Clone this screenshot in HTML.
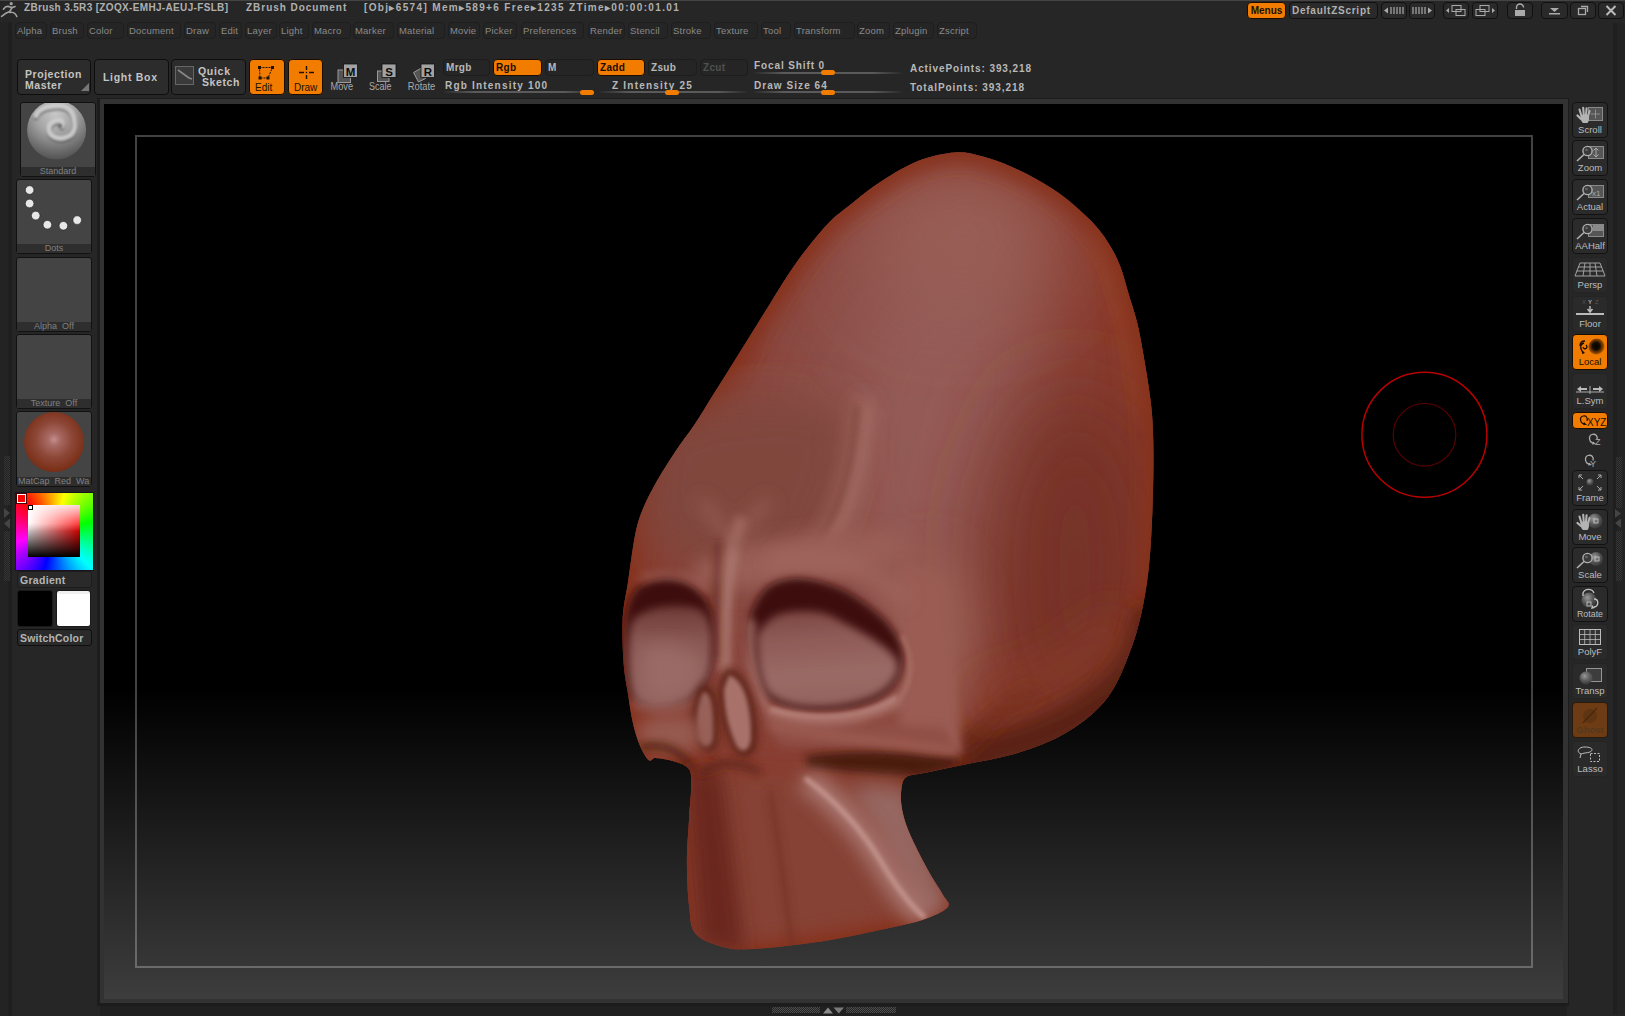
<!DOCTYPE html>
<html><head><meta charset="utf-8">
<style>
*{margin:0;padding:0;box-sizing:border-box}
html,body{width:1625px;height:1016px;overflow:hidden;background:#262626;font-family:"Liberation Sans",sans-serif}
.a{position:absolute}
.t{position:absolute;white-space:nowrap;font-weight:bold;color:#b0b0b0;font-size:10px;line-height:12px}
.mb{position:absolute;top:22px;height:17px;border:1px solid #1e1e1e;border-radius:4px;background:#252525;color:#8a8a8a;font-size:9.5px;line-height:15px;padding-left:1px;white-space:nowrap;letter-spacing:0.2px}
.tb{position:absolute;top:59px;height:36px;border:1px solid #0e0e0e;border-radius:4px;background:#2c2c2c;color:#c8c8c8;font-weight:bold;font-size:11px;line-height:11px;white-space:nowrap}
.or{background:#f27c00;border-color:#1a0d00;color:#1a1000}
.sb{position:absolute;top:59px;height:17px;border:1px solid #1d1d1d;border-radius:4px;background:#252525;color:#b8b8b8;font-weight:bold;font-size:10px;line-height:15px;padding-left:2px;letter-spacing:0.3px}
.sl{position:absolute;height:2px;background:linear-gradient(to right,#2a2a2a,#5a5a5a 20%,#5a5a5a 80%,#2a2a2a)}
.kn{position:absolute;width:14px;height:5px;border-radius:3px;background:#f27c00}
.lb{position:absolute;left:16px;width:76px;height:75px;border:1px solid #111;border-radius:3px;background:#444}
.lbl{position:absolute;left:0;right:0;bottom:0;height:9px;background:#2e2e2e;color:#808080;font-size:9px;line-height:9px;text-align:center;white-space:nowrap;overflow:hidden}
.rb{position:absolute;left:1572px;width:36px;height:36px;border:1px solid #121212;border-radius:4px;background:#2b2b2b;color:#c0c0c0;font-size:9px;text-align:center}
.rb span{position:absolute;left:0;right:0;bottom:2px;line-height:9px}
.rb.or{background:#f27c00;border-color:#1a0d00}
.rf{border-color:#242424;background:#2a2a2a}
.wb{position:absolute;top:2px;height:17px;border:1px solid #111;border-radius:4px;background:#2a2a2a;color:#b0b0b0;font-weight:bold;font-size:10px;line-height:15px;text-align:center}
.wb.or{background:#f27c00;border-color:#1a0d00}
.sb.or{background:#f27c00;border-color:#1a0d00;color:#1a0d00}
</style></head><body>
<!-- title bar -->
<div class="a" style="left:0;top:0;width:1625px;height:1px;background:#444"></div>
<svg class="a" style="left:0;top:0" width="24" height="20"><g fill="none" stroke="#a2a2a2" stroke-width="1.6" stroke-linecap="round"><path d="M3.4 9.2 C5 7 6.5 6.2 8 6.4 C10 6.8 11 7.6 12.5 7.4 C13.5 7.2 14.5 6.8 15 6.5"/><path d="M12 7.8 L9.6 11.6 C7 12.5 4 14.5 1.6 16.4"/><path d="M9.6 12.4 C11.5 12 13.5 12.2 14.8 13.5 C15.8 14.5 16.4 15.5 16.8 16.5"/></g><circle cx="11.2" cy="3.7" r="1.6" fill="#a2a2a2"/></svg>
<div class="t" id="t1" style="left:24px;top:2px;letter-spacing:0.34px">ZBrush 3.5R3 [ZOQX-EMHJ-AEUJ-FSLB]</div>
<div class="t" id="t2" style="left:246px;top:2px;letter-spacing:0.97px">ZBrush Document</div>
<div class="t" id="t3" style="left:364px;top:2px;letter-spacing:1.35px">[Obj&#9656;6574] Mem&#9656;589+6 Free&#9656;1235 ZTime&#9656;00:00:01.01</div>


<!-- menu bar -->
<div class="mb" style="left:15px;width:32px">Alpha</div>
<div class="mb" style="left:50px;width:34px">Brush</div>
<div class="mb" style="left:87px;width:37px">Color</div>
<div class="mb" style="left:127px;width:54px">Document</div>
<div class="mb" style="left:184px;width:32px">Draw</div>
<div class="mb" style="left:219px;width:23px">Edit</div>
<div class="mb" style="left:245px;width:32px">Layer</div>
<div class="mb" style="left:279px;width:30px">Light</div>
<div class="mb" style="left:312px;width:39px">Macro</div>
<div class="mb" style="left:353px;width:41px">Marker</div>
<div class="mb" style="left:397px;width:48px">Material</div>
<div class="mb" style="left:448px;width:32px">Movie</div>
<div class="mb" style="left:483px;width:34px">Picker</div>
<div class="mb" style="left:521px;width:63px">Preferences</div>
<div class="mb" style="left:588px;width:37px">Render</div>
<div class="mb" style="left:628px;width:40px">Stencil</div>
<div class="mb" style="left:671px;width:40px">Stroke</div>
<div class="mb" style="left:714px;width:44px">Texture</div>
<div class="mb" style="left:761px;width:30px">Tool</div>
<div class="mb" style="left:794px;width:61px">Transform</div>
<div class="mb" style="left:857px;width:33px">Zoom</div>
<div class="mb" style="left:893px;width:41px">Zplugin</div>
<div class="mb" style="left:937px;width:40px">Zscript</div>

<!-- right title buttons -->
<div class="wb or" style="left:1247px;width:39px;color:#201000">Menus</div>
<div class="wb" style="left:1289px;width:89px;letter-spacing:0.75px;text-align:left;padding-left:2px">DefaultZScript</div>
<div class="wb" style="left:1381px;width:26px"><svg width="24" height="15" viewBox="0 0 24 15"><path d="M2 7.5 L6 4.5 V10.5Z" fill="#aaa"/><g stroke="#aaa" stroke-width="1.2"><path d="M9 4V11M12 4V11M15 4V11M18 4V11M21 4V11"/></g></svg></div>
<div class="wb" style="left:1409px;width:26px"><svg width="24" height="15" viewBox="0 0 24 15"><g stroke="#aaa" stroke-width="1.2"><path d="M3 4V11M6 4V11M9 4V11M12 4V11M15 4V11"/></g><path d="M22 7.5 L18 4.5 V10.5Z" fill="#aaa"/></svg></div>
<div class="wb" style="left:1443px;width:26px"><svg width="24" height="15" viewBox="0 0 24 15"><path d="M2 7.5 L5 5 V10Z" fill="#aaa"/><g fill="none" stroke="#aaa" stroke-width="1"><rect x="8" y="2.5" width="9" height="6"/><rect x="12" y="6.5" width="9" height="6"/></g></svg></div>
<div class="wb" style="left:1472px;width:26px"><svg width="24" height="15" viewBox="0 0 24 15"><g fill="none" stroke="#aaa" stroke-width="1"><rect x="3" y="6.5" width="9" height="6"/><rect x="7" y="2.5" width="9" height="6"/></g><path d="M22 7.5 L19 5 V10Z" fill="#aaa"/></svg></div>
<div class="wb" style="left:1507px;width:26px"><svg width="24" height="15" viewBox="0 0 24 15"><path d="M8.5 6 V4.5 a3.5 3.5 0 0 1 7 0" fill="none" stroke="#aaa" stroke-width="1.4"/><rect x="7" y="7" width="10" height="6" fill="#aaa"/></svg></div>
<div class="wb" style="left:1541px;width:27px"><svg width="25" height="15" viewBox="0 0 25 15"><path d="M8 5 H17 L12.5 9Z" fill="#aaa"/><rect x="7" y="10" width="11" height="1.5" fill="#aaa"/></svg></div>
<div class="wb" style="left:1570px;width:26px"><svg width="24" height="15" viewBox="0 0 24 15"><g fill="none" stroke="#aaa" stroke-width="1.3"><rect x="7.5" y="5.5" width="7" height="6"/><path d="M10 3.5 H16.5 V9"/></g></svg></div>
<div class="wb" style="left:1598px;width:26px"><svg width="24" height="15" viewBox="0 0 24 15"><path d="M7.5 3 L16.5 12 M16.5 3 L7.5 12" stroke="#bbb" stroke-width="2"/></svg></div>

<!-- toolbar -->
<div class="tb" style="left:17px;width:74px"><div class="t" style="left:7px;top:7.5px;font-size:10.5px;color:#c4c4c4;letter-spacing:0.55px">Projection</div><div class="t" style="left:7px;top:18.5px;font-size:10.5px;color:#c4c4c4;letter-spacing:0.55px">Master</div><svg class="a" style="left:63px;top:23px" width="8" height="8"><path d="M8 0 V8 H0Z" fill="#777"/></svg></div>
<div class="tb" style="left:94px;width:75px"><div class="t" style="left:8px;top:11px;font-size:10.5px;color:#c4c4c4;letter-spacing:0.7px">Light Box</div></div>
<div class="tb" style="left:171px;width:75px"><div class="a" style="left:3px;top:6px;width:19px;height:19px;border:1px solid #666;background:#3a3a3a"></div><svg class="a" style="left:5px;top:8px" width="16" height="14"><path d="M1 2 L12 10 L15 11" stroke="#888" stroke-width="1.6" fill="none"/></svg><div class="t" style="left:26px;top:5px;font-size:10.5px;color:#c4c4c4;letter-spacing:0.7px">Quick</div><div class="t" style="left:30px;top:15.5px;font-size:10.5px;color:#c4c4c4;letter-spacing:0.6px">Sketch</div></div>
<div class="tb or" style="left:249px;width:36px"><svg class="a" style="left:7px;top:5px" width="22" height="16"><path d="M2.5 2.5 H15.5 L11 13 H3Z" fill="none" stroke="#201000" stroke-width="1" stroke-dasharray="2 1"/><g fill="#201000"><rect x="1" y="1" width="3" height="3"/><rect x="14" y="1" width="3" height="3"/><rect x="1.5" y="11.5" width="3" height="3"/><rect x="9.5" y="11.5" width="3" height="3"/></g></svg><div class="t" style="left:5px;top:22px;font-weight:normal;color:#201000;font-size:10px">Edit</div></div>
<div class="tb or" style="left:288px;width:35px"><svg class="a" style="left:7px;top:5px" width="22" height="16"><g stroke="#201000" stroke-width="1.4"><path d="M10.5 1V5M10.5 10V14M3 7.5H8M13 7.5H18"/></g><rect x="9.8" y="6.8" width="1.4" height="1.4" fill="#201000"/></svg><div class="t" style="left:5px;top:22px;font-weight:normal;color:#201000;font-size:10px">Draw</div></div>
<svg class="a" style="left:325px;top:58px" width="115" height="38">
 <g fill="#545454" stroke="#9a9a9a" stroke-width="1"><rect x="13" y="12" width="12.5" height="12.5"/><rect x="52.5" y="13" width="11.5" height="10.5"/><path d="M88.5 14.5 L95.5 10.5 L100.5 20.5 L93.5 24Z"/></g>
 <g fill="#a2a2a2" stroke="#111" stroke-width="0.8"><rect x="18.5" y="6" width="14" height="13.5"/><rect x="57" y="6" width="14" height="13.5"/><rect x="96" y="6" width="13.5" height="13.5"/></g>
 <g font-family="Liberation Sans" font-weight="bold" font-size="11.5" fill="#0a0a0a" text-anchor="middle"><text x="25.5" y="17.5">M</text><text x="64" y="17.5">S</text><text x="103" y="17.5">R</text></g>
 <g font-family="Liberation Sans" font-size="10" fill="#aaa"><text x="5.5" y="32" textLength="22.5" lengthAdjust="spacingAndGlyphs">Move</text><text x="44" y="32" textLength="22.5" lengthAdjust="spacingAndGlyphs">Scale</text><text x="82.8" y="32" textLength="27.5" lengthAdjust="spacingAndGlyphs">Rotate</text></g>
</svg>

<!-- toolbar right part -->
<div class="sb" style="left:443px;width:47px">Mrgb</div>
<div class="sb or" style="left:493px;width:49px">Rgb</div>
<div class="sb" style="left:545px;width:49px">M</div>
<div class="sb or" style="left:597px;width:48px">Zadd</div>
<div class="sb" style="left:648px;width:49px">Zsub</div>
<div class="sb" style="left:700px;width:48px;color:#505050">Zcut</div>
<div class="t" id="t4" style="left:445px;top:80px;color:#b8b8b8;letter-spacing:1.2px">Rgb Intensity 100</div>
<div class="sl" style="left:444px;top:91px;width:150px"></div>
<div class="kn" style="left:580px;top:90px"></div>
<div class="t" id="t5" style="left:612px;top:80px;color:#b8b8b8;letter-spacing:1.22px">Z Intensity 25</div>
<div class="sl" style="left:600px;top:91px;width:147px"></div>
<div class="kn" style="left:665px;top:90px"></div>
<div class="t" id="t6" style="left:754px;top:60px;color:#b8b8b8;letter-spacing:0.89px">Focal Shift 0</div>
<div class="sl" style="left:754px;top:72px;width:148px"></div>
<div class="kn" style="left:821px;top:70px"></div>
<div class="t" id="t7" style="left:754px;top:79.5px;color:#b8b8b8;letter-spacing:1.06px">Draw Size 64</div>
<div class="sl" style="left:754px;top:91px;width:148px"></div>
<div class="kn" style="left:821px;top:90px"></div>
<div class="t" id="t8" style="left:910px;top:62.5px;color:#b8b8b8;letter-spacing:0.91px">ActivePoints: 393,218</div>
<div class="t" id="t9" style="left:910px;top:81.5px;color:#b8b8b8;letter-spacing:0.95px">TotalPoints: 393,218</div>

<!-- left shelf strip -->
<div class="a" style="left:0;top:22px;width:12px;height:994px;background:#232323"></div><div class="a" style="left:8px;top:22px;width:4px;height:994px;background:#1f1f1f"></div>


<!-- left shelf -->

<div class="lb" style="left:20px;top:102px;width:76px;height:75px">
 <svg class="a" style="left:0;top:0" width="74" height="64"><defs>
  <radialGradient id="sg1" cx="0.48" cy="0.22" r="0.85"><stop offset="0" stop-color="#c8c8c8"/><stop offset="0.4" stop-color="#a4a4a4"/><stop offset="0.75" stop-color="#6c6c6c"/><stop offset="1" stop-color="#474747"/></radialGradient>
  <filter id="bl1" filterUnits="userSpaceOnUse" x="0" y="0" width="74" height="64"><feGaussianBlur stdDeviation="1.1"/></filter></defs>
  <circle cx="35.6" cy="27" r="29.5" fill="url(#sg1)"/>
  <g filter="url(#bl1)" fill="none" stroke-linecap="round">
   <path d="M15.1 14.7 C18 7 30 4 41.1 5.3 C50 7 54 15 53.7 26.6 C53 33 48 36 43 37 C36 38.5 29 35 27.9 30 C27 24 31 20 37.9 19.5 C41 19.5 42 22 41 25" stroke="#444" stroke-width="5" opacity="0.55"/>
   <path d="M15.1 12.7 C18 5 30 2 41.1 3.3 C50 5 54 13 53.7 24.6 C53 31 48 34 43 35 C36 36.5 29 33 27.9 28 C27 22 31 18 37.9 17.5 C41 17.5 42 20 41 23" stroke="#d4d4d4" stroke-width="4.5" opacity="0.9"/>
  </g>
  <circle cx="39" cy="23" r="2.2" fill="#6a6a6a" filter="url(#bl1)"/>
 </svg>
 <div class="lbl">Standard</div></div>
<div class="lb" style="top:179px;height:75px">
 <svg class="a" style="left:0;top:0" width="74" height="64"><g fill="#e8e8e8" stroke="#222" stroke-width="0.6"><circle cx="12.6" cy="10" r="4.3"/><circle cx="12.6" cy="23.5" r="4.3"/><circle cx="18.7" cy="35.6" r="4.3"/><circle cx="30.4" cy="44.7" r="4.3"/><circle cx="46.4" cy="45.8" r="4.3"/><circle cx="60.2" cy="40.1" r="4.3"/></g></svg>
 <div class="lbl">Dots</div></div>
<div class="lb" style="top:257px;height:75px"><div class="lbl">Alpha&nbsp; Off</div></div>
<div class="lb" style="top:334px;height:75px"><div class="lbl">Texture&nbsp; Off</div></div>
<div class="lb" style="top:411px;height:76px">
 <div class="a" style="left:6.8px;top:0px;width:60px;height:60px;border-radius:50%;background:radial-gradient(circle at 50% 46%,#c48e8c 0%,#a86a64 14%,#8e4838 40%,#7a3018 70%,#621c06 100%)"></div>
 <div class="lbl" style="text-align:left;padding-left:1px">MatCap&nbsp; Red&nbsp; Wa</div></div>
<!-- color picker -->
<div class="a" style="left:15px;top:492px;width:79px;height:79px;border:1px solid #1a1420;background:conic-gradient(from 315deg,#f00,#ff0 60deg,#0f0 120deg,#0ff 180deg,#00f 240deg,#f0f 300deg,#f00 360deg)"></div>
<div class="a" style="left:28px;top:505px;width:52px;height:52px;background:linear-gradient(to bottom,rgba(0,0,0,0) 0%,rgba(0,0,0,0) 35%,#000 100%),linear-gradient(to right,#fff 0%,#f00 100%)"></div>
<div class="a" style="left:28px;top:505px;width:52px;height:52px;background:linear-gradient(to bottom,rgba(255,255,255,0.85) 0%,rgba(255,255,255,0) 50%)"></div>
<div class="a" style="left:17px;top:494px;width:9px;height:9px;border:1.5px solid #fff;background:#f00;box-shadow:0 0 0 1px #400"></div>
<div class="a" style="left:28px;top:505px;width:5px;height:5px;border:1px solid #000;background:#fff"></div>
<div class="a" style="left:17px;top:571px;width:75px;height:17px;border:1px solid #1c1c1c;border-radius:3px;background:#2a2a2a"><div class="t" style="left:2px;top:2px;font-size:10.5px;color:#b4b4b4;letter-spacing:0.3px">Gradient</div></div>
<div class="a" style="left:17px;top:590px;width:36px;height:37px;border:1px solid #1a1a1a;border-radius:3px;background:#000"></div>
<div class="a" style="left:56px;top:590px;width:35px;height:37px;border:1px solid #1a1a1a;border-radius:3px;background:linear-gradient(#f0f0f0 0,#f0f0f0 3px,#fff 3px)"></div>
<div class="a" style="left:17px;top:629px;width:75px;height:17px;border:1px solid #0f0f0f;border-radius:3px;background:#2a2a2a"><div class="t" style="left:2px;top:2px;font-size:10.5px;color:#b4b4b4;letter-spacing:0.2px">SwitchColor</div></div>
<!-- left scroll -->
<div class="a" style="left:4px;top:456px;width:6px;height:49px;background:repeating-conic-gradient(#363636 0 25%,#222 0 50%) 0 0/2px 2px"></div>
<svg class="a" style="left:3px;top:507px" width="8" height="23"><path d="M1 1 L7 6 L1 11Z" fill="#444"/><path d="M7 11.5 L1 16.5 L7 22Z" fill="#444"/></svg>
<div class="a" style="left:4px;top:531px;width:6px;height:50px;background:repeating-conic-gradient(#363636 0 25%,#222 0 50%) 0 0/2px 2px"></div>

<!-- canvas -->
<div class="a" style="left:97px;top:98px;width:1472px;height:908px;background:#1c1c1c"></div>
<div class="a" style="left:100px;top:99px;width:1468px;height:904px;background:#323232"></div>
<div class="a" style="left:104px;top:104px;width:1459px;height:895px;background:linear-gradient(to bottom,#000 0px,#000 585px,#3d3d3d 895px)"></div>
<div class="a" style="left:135px;top:135px;width:1398px;height:833px;border:2px solid rgba(255,255,255,0.26)"></div>
<div class="a" style="left:100px;top:1006px;width:1467px;height:10px;background:#202020"></div>

<!-- skull -->
<svg class="a" style="left:0;top:0" width="1625" height="1016" viewBox="0 0 1625 1016">
<defs>
 <clipPath id="sk"><path id="skp" d="M955.0 152.4 C965.6 151.7 973.5 154.2 982.7 156.5 C991.9 158.8 1001.0 162.3 1010.2 166.2 C1019.4 170.1 1028.6 174.7 1037.8 180.0 C1047.0 185.3 1056.1 190.8 1065.3 197.9 C1074.5 205.0 1085.6 214.9 1092.9 222.7 C1100.2 230.5 1104.8 237.3 1109.4 244.7 C1114.0 252.0 1117.2 258.5 1120.4 266.8 C1123.6 275.1 1125.9 285.1 1128.7 294.3 C1131.5 303.5 1134.7 312.7 1137.0 321.9 C1139.3 331.1 1140.7 339.3 1142.5 349.4 C1144.3 359.5 1146.4 371.5 1148.0 382.5 C1149.6 393.5 1151.2 403.1 1152.1 415.6 C1153.0 428.1 1153.5 441.1 1153.5 457.4 C1153.5 473.7 1153.1 494.8 1152.3 513.5 C1151.5 532.2 1150.5 552.7 1148.6 569.5 C1146.7 586.3 1144.2 600.7 1141.1 614.4 C1138.0 628.1 1134.6 639.3 1129.9 651.8 C1125.2 664.3 1119.6 678.6 1113.1 689.2 C1106.6 699.8 1100.0 707.2 1090.7 715.3 C1081.4 723.4 1070.1 731.2 1057.0 737.8 C1043.9 744.3 1027.0 750.2 1012.1 754.6 C997.1 759.0 982.2 760.8 967.3 763.9 C952.3 767.0 932.5 771.1 922.4 773.3 C912.3 775.4 910.2 774.5 906.8 776.8 C903.3 779.1 902.6 781.9 901.7 787.0 C900.9 792.1 900.4 799.8 901.7 807.5 C903.0 815.2 905.1 822.8 909.4 833.0 C913.7 843.2 921.8 858.6 927.3 868.9 C932.8 879.1 939.3 888.1 942.7 894.5 C946.1 900.9 951.2 903.0 947.8 907.3 C944.4 911.5 933.7 916.2 922.2 920.0 C910.7 923.8 894.5 926.9 878.7 930.3 C862.9 933.7 846.7 937.5 827.5 940.5 C808.3 943.5 780.1 947.0 763.5 948.2 C746.9 949.4 738.9 950.2 727.6 947.9 C716.4 945.6 702.4 941.1 696.0 934.3 C689.6 927.5 690.7 919.2 689.2 907.1 C687.7 895.0 686.9 877.0 686.9 861.9 C686.9 846.8 688.5 830.3 689.2 816.7 C690.0 803.1 691.8 788.8 691.4 780.5 C691.0 772.2 690.7 770.3 686.9 766.9 C683.1 763.5 674.1 761.6 668.8 760.1 C663.5 758.6 658.6 757.9 655.2 757.9 C651.8 757.9 651.1 762.4 648.5 760.1 C645.9 757.8 642.0 750.7 639.4 744.3 C636.8 737.9 634.5 730.0 632.6 721.7 C630.7 713.4 629.6 704.3 628.1 694.5 C626.6 684.7 624.5 675.7 623.6 662.9 C622.7 650.1 622.0 631.2 622.7 617.6 C623.5 604.0 626.1 595.0 628.1 581.4 C630.1 567.8 632.5 548.1 634.9 536.2 C637.3 524.3 638.6 519.5 642.4 510.2 C646.1 500.9 651.8 490.3 657.4 480.3 C663.0 470.3 669.9 459.8 676.1 450.4 C682.3 441.0 688.6 433.5 694.8 424.2 C701.0 414.9 707.3 404.3 713.5 394.3 C719.7 384.3 726.0 374.4 732.2 364.4 C738.4 354.4 744.7 344.5 750.9 334.5 C757.1 324.5 763.4 314.5 769.6 304.5 C775.8 294.5 782.1 283.9 788.3 274.6 C794.5 265.3 800.1 257.2 807.0 248.5 C813.9 239.8 821.9 229.8 829.4 222.3 C836.9 214.8 843.2 210.5 851.9 203.6 C860.6 196.7 870.6 188.3 881.8 181.1 C893.0 173.9 907.0 165.4 919.2 160.6 C931.4 155.8 944.4 153.1 955.0 152.4Z"/></clipPath>
 <linearGradient id="eyeg" x1="0" y1="0" x2="0.1" y2="1"><stop offset="0" stop-color="#7a4440"/><stop offset="0.3" stop-color="#8e5a56"/><stop offset="0.7" stop-color="#9a6a66"/><stop offset="1" stop-color="#946460"/></linearGradient>
 <linearGradient id="eyeg2" x1="0" y1="0" x2="0" y2="1"><stop offset="0" stop-color="#6e3a36"/><stop offset="0.35" stop-color="#8a5854"/><stop offset="1" stop-color="#946460"/></linearGradient>
 <filter id="b60" filterUnits="userSpaceOnUse" x="0" y="0" width="1625" height="1016"><feGaussianBlur stdDeviation="45"/></filter>
 <filter id="b25" filterUnits="userSpaceOnUse" x="0" y="0" width="1625" height="1016"><feGaussianBlur stdDeviation="22"/></filter>
 <filter id="b10" filterUnits="userSpaceOnUse" x="0" y="0" width="1625" height="1016"><feGaussianBlur stdDeviation="9"/></filter>
 <filter id="b5" filterUnits="userSpaceOnUse" x="0" y="0" width="1625" height="1016"><feGaussianBlur stdDeviation="4"/></filter>
 <filter id="b2" filterUnits="userSpaceOnUse" x="0" y="0" width="1625" height="1016"><feGaussianBlur stdDeviation="2"/></filter>
</defs>
<g clip-path="url(#sk)">
 <rect x="600" y="140" width="580" height="820" fill="#883a2c"/>
 <!-- front face lighter plane -->
 <path d="M800 230 C880 160 980 170 1010 260 C1030 380 1010 520 985 640 C970 700 950 740 900 740 L700 720 C690 600 700 400 800 230Z" fill="#8a4c44" filter="url(#b60)"/>
 <!-- cranium highlight -->
 <ellipse cx="935" cy="420" rx="100" ry="190" transform="rotate(12 935 420)" fill="#955c56" filter="url(#b60)"/>
 <path d="M1095 225 C1120 280 1135 350 1142 420" stroke="#96442c" stroke-width="18" fill="none" filter="url(#b10)"/>
 <!-- right darker orange region -->
 <ellipse cx="1075" cy="570" rx="85" ry="190" fill="#763026" filter="url(#b60)"/>
 <ellipse cx="965" cy="235" rx="100" ry="70" fill="#9a6058" filter="url(#b60)"/>
 <!-- rim -->
 <use href="#skp" fill="none" stroke="#86301e" stroke-width="22" filter="url(#b10)"/>
 <!-- left brow darker zone -->
 <ellipse cx="735" cy="500" rx="80" ry="50" transform="rotate(-40 735 500)" fill="#82463e" filter="url(#b60)"/>
 <!-- brow crease -->
 <path d="M650 430 C700 400 780 390 850 410 L848 470 L829 518 L800 568 L760 575 L700 565 L640 530Z" fill="#80463e" filter="url(#b25)"/>
 <path d="M864 400 C862 440 856 470 846 500 C838 525 822 550 800 570" stroke="#a8726a" stroke-width="16" fill="none" filter="url(#b10)"/>
 <path d="M857 405 C855 440 850 470 840 498 C832 522 816 548 794 567" stroke="#6e342c" stroke-width="4" fill="none" filter="url(#b5)"/>
 <!-- face right of eye light -->
 <ellipse cx="930" cy="640" rx="45" ry="90" fill="#9a5e54" filter="url(#b25)"/>
 <!-- above eyes light -->
 <ellipse cx="800" cy="560" rx="110" ry="25" transform="rotate(-8 800 560)" fill="#9a5e56" filter="url(#b10)"/>
 <!-- under cranium shadow -->
 <path d="M955 775 C1010 760 1070 745 1105 710 C1130 690 1145 650 1150 610 L1175 610 L1175 800 L950 800Z" fill="#4a1c12" filter="url(#b10)"/>
 <path d="M962 760 C1020 745 1080 725 1115 690 C1135 668 1148 640 1152 610" stroke="#5a2012" stroke-width="40" fill="none" filter="url(#b10)"/>
 <path d="M958 752 C990 720 1010 700 1040 690" stroke="#6a2616" stroke-width="14" fill="none" filter="url(#b10)"/>
 <path d="M975 700 C1030 690 1090 660 1120 620" stroke="#8a3c28" stroke-width="22" fill="none" filter="url(#b25)"/>
 <!-- cheek plane light -->
 <path d="M900 560 L945 580 L962 752 L900 745Z" fill="#9a5c52" filter="url(#b5)"/>
 <!-- cheek lower band and shadow -->
 <path d="M760 712 C820 722 880 722 945 728 L960 758 C900 752 840 748 780 745Z" fill="#905046" filter="url(#b5)"/>
 <path d="M805 756 C840 750 890 750 930 756 C950 758 962 756 962 760 C950 772 925 776 900 777 C860 774 830 771 808 769Z" fill="#4a1a10" filter="url(#b5)"/>
 <path d="M770 725 C830 738 900 742 958 752" stroke="#a05e52" stroke-width="6" fill="none" filter="url(#b5)"/>
 <!-- right eye socket -->
 <path d="M748.0 640.0 C747.5 629.9 748.2 620.3 751.8 611.2 C755.4 602.1 761.6 591.1 769.5 585.6 C777.4 580.1 788.2 577.9 799.0 578.0 C809.8 578.1 824.0 582.2 834.5 586.0 C845.0 589.8 852.8 594.5 862.0 601.0 C871.2 607.5 882.8 616.4 889.6 625.0 C896.4 633.6 901.6 643.3 903.0 652.5 C904.4 661.7 902.5 672.1 898.0 680.0 C893.5 687.9 886.0 695.0 876.0 700.0 C866.0 705.0 850.8 708.3 838.0 710.0 C825.2 711.7 810.8 712.0 799.0 710.0 C787.2 708.0 774.3 704.3 767.0 698.0 C759.7 691.7 758.2 681.7 755.0 672.0 C751.8 662.3 748.5 650.1 748.0 640.0Z" fill="#3c0e08" filter="url(#b5)"/>
 <path d="M759.0 632.0 C762.8 626.0 770.0 617.3 780.0 614.0 C790.0 610.7 807.0 610.0 818.7 612.0 C830.4 614.0 839.7 620.5 850.2 626.0 C860.7 631.5 873.8 639.0 881.7 645.0 C889.6 651.0 895.5 656.2 897.5 662.0 C899.5 667.8 897.4 674.3 893.5 680.0 C889.6 685.7 883.1 691.7 873.9 696.0 C864.7 700.3 850.9 704.1 838.4 705.7 C825.9 707.3 810.5 707.7 799.0 705.7 C787.5 703.7 776.0 699.8 769.5 693.9 C763.0 688.0 761.7 677.5 759.7 670.2 C757.7 662.9 757.6 656.4 757.5 650.0 C757.4 643.6 755.2 638.0 759.0 632.0Z" fill="url(#eyeg)" filter="url(#b5)"/>
 <path d="M768 710 C810 724 862 724 899 699" stroke="#b07a72" stroke-width="9" fill="none" filter="url(#b5)"/>
 <path d="M770 709 C810 720 862 720 897 697" stroke="#bc8a82" stroke-width="3" fill="none" filter="url(#b2)"/>
 <path d="M902 635 C915 660 912 685 897 702" stroke="#a86e64" stroke-width="4" fill="none" filter="url(#b2)"/>
 <path d="M752 620 C748 650 752 685 768 708" stroke="#b48078" stroke-width="6" fill="none" filter="url(#b5)"/>
 <!-- left eye socket -->
 <path d="M624.0 640.0 C624.2 626.7 625.3 614.0 628.0 605.0 C630.7 596.0 634.2 590.5 640.0 586.0 C645.8 581.5 655.3 578.7 663.0 578.0 C670.7 577.3 679.0 578.7 686.0 582.0 C693.0 585.3 700.3 591.7 705.0 598.0 C709.7 604.3 712.2 612.2 714.0 620.0 C715.8 627.8 716.5 636.3 716.0 645.0 C715.5 653.7 714.7 663.2 711.0 672.0 C707.3 680.8 701.7 692.0 694.0 698.0 C686.3 704.0 674.0 706.8 665.0 708.0 C656.0 709.2 646.3 708.8 640.0 705.0 C633.7 701.2 629.7 695.8 627.0 685.0 C624.3 674.2 623.8 653.3 624.0 640.0Z" fill="#3c0e08" filter="url(#b5)"/>
 <path d="M630.0 628.0 C633.2 615.0 641.7 613.7 650.0 610.0 C658.3 606.3 671.2 605.7 680.0 606.0 C688.8 606.3 697.5 607.2 703.0 612.0 C708.5 616.8 711.8 626.0 713.0 635.0 C714.2 644.0 713.2 656.2 710.0 666.0 C706.8 675.8 701.0 687.3 694.0 694.0 C687.0 700.7 676.2 704.2 668.0 706.0 C659.8 707.8 651.2 708.0 645.0 705.0 C638.8 702.0 633.5 700.8 631.0 688.0 C628.5 675.2 626.8 641.0 630.0 628.0Z" fill="url(#eyeg2)" filter="url(#b5)"/>
 <path d="M640 650 C660 640 690 645 705 665 C700 690 680 702 660 703 C645 700 638 680 640 650Z" fill="#9a6a66" filter="url(#b10)"/>
 <path d="M632 702 C652 714 682 710 702 697" stroke="#a46c64" stroke-width="5" fill="none" filter="url(#b5)"/>
 <path d="M640 580 C660 572 690 574 708 590" stroke="#9c6058" stroke-width="5" fill="none" filter="url(#b5)"/>
 <!-- brow light above right eye -->
 <path d="M770 565 C810 550 860 560 905 600" stroke="#a46a62" stroke-width="10" fill="none" filter="url(#b10)"/>
 <!-- nose bridge -->
 <path d="M742 518 C734 540 727 560 726 590 C724 620 722 645 724 672" stroke="#a26c64" stroke-width="11" fill="none" filter="url(#b5)"/>
 <path d="M700 500 C715 515 725 530 730 550 M770 500 C755 515 740 530 733 550" stroke="#9a625a" stroke-width="8" fill="none" filter="url(#b10)"/>
 <path d="M735 550 C730 570 728 585 727 605 C726 625 725 650 727 668" stroke="#b08078" stroke-width="4" fill="none" filter="url(#b5)"/>
 <path d="M718 540 C716 580 716 620 716 660" stroke="#5a2218" stroke-width="4" fill="none" filter="url(#b5)"/>
 <!-- nasal openings -->
 <path d="M727 668 C746 670 758 700 757 742 C755 758 742 761 734 750 C723 730 717 702 720 682Z" fill="#5a2218" filter="url(#b5)"/>
 <path d="M729 675 C743 679 752 704 751 740 C749 752 741 754 736 745 C727 726 723 704 724 688Z" fill="#a8726a" filter="url(#b2)"/>
 <path d="M702 684 C715 682 720 706 718 742 C716 755 703 757 694 740 C689 718 692 698 702 684Z" fill="#5a2218" filter="url(#b5)"/>
 <path d="M703 692 C712 691 714 710 713 738 C711 748 704 750 698 738 C695 720 697 703 703 692Z" fill="#98625a" filter="url(#b2)"/>
 <!-- lower left face lighter -->
 <ellipse cx="670" cy="735" rx="35" ry="20" fill="#965a50" filter="url(#b10)"/>
 <!-- left cheek below left eye -->
 
 <!-- left cheek corner shadow -->
 <path d="M640 748 C660 742 680 748 695 772" stroke="#4a1a10" stroke-width="6" fill="none" filter="url(#b5)"/>
 <!-- jaw -->
 <path d="M690 775 L905 780 L948 908 L700 950Z" fill="#864236" filter="url(#b10)"/>
 <path d="M686 770 L700 945 L745 952 L722 770Z" fill="#6a281c" filter="url(#b10)"/>
 <path d="M850 790 C880 782 905 785 912 800 C925 850 940 880 948 906 L925 918 C900 880 880 830 850 790Z" fill="#966660" filter="url(#b10)"/>
 <path d="M805 778 C835 800 862 830 880 860 C895 885 910 905 925 918" stroke="#a87670" stroke-width="24" fill="none" filter="url(#b10)"/>
 <path d="M805 778 C835 800 862 830 880 860 C895 885 910 905 925 918" stroke="#c4948c" stroke-width="5" fill="none" filter="url(#b2)"/>
 <path d="M770 790 C778 840 785 890 792 945" stroke="#6e2e22" stroke-width="4" fill="none" filter="url(#b5)"/>
 <path d="M700 775 C715 760 735 760 760 772" stroke="#5a2016" stroke-width="6" fill="none" filter="url(#b5)"/>
</g>
</svg>

<!-- brush cursor -->
<svg class="a" style="left:1350px;top:360px" width="150" height="150"><circle cx="74.4" cy="74.8" r="62.5" fill="none" stroke="#b80000" stroke-width="1.5"/><circle cx="74.5" cy="74.8" r="31.3" fill="none" stroke="#5a0000" stroke-width="1.2"/></svg>
<!-- bottom widget -->
<div class="a" style="left:772px;top:1007px;width:48px;height:6px;background:repeating-conic-gradient(#4c4c4c 0 25%,#262626 0 50%) 0 0/2px 2px"></div>
<svg class="a" style="left:822px;top:1006px" width="24" height="8"><path d="M1 7.5 L6 1.5 L11 7.5Z" fill="#8a8a8a"/><path d="M11.5 1.5 L22 1.5 L16.8 7.5Z" fill="#7a7a7a"/></svg>
<div class="a" style="left:846px;top:1007px;width:50px;height:6px;background:repeating-conic-gradient(#4c4c4c 0 25%,#262626 0 50%) 0 0/2px 2px"></div>

<!-- right strip -->
<div class="a" style="left:1613px;top:23px;width:12px;height:991px;background:#232323"></div><div class="a" style="left:1613px;top:23px;width:4px;height:991px;background:#1f1f1f"></div>


<!-- right shelf -->
<svg width="0" height="0" style="position:absolute"><defs><radialGradient id="rball" cx="0.4" cy="0.35" r="0.65"><stop offset="0" stop-color="#9a9a9a"/><stop offset="0.6" stop-color="#555"/><stop offset="1" stop-color="#3a3a3a"/></radialGradient><radialGradient id="rdark" cx="0.45" cy="0.45" r="0.55"><stop offset="0" stop-color="#000"/><stop offset="0.4" stop-color="#000" stop-opacity="0.9"/><stop offset="0.8" stop-color="#3a1800" stop-opacity="0.5"/><stop offset="1" stop-color="#f27c00" stop-opacity="0"/></radialGradient></defs></svg>
<div class="rb " style="top:102px;height:36px"><svg class="a" style="left:-1px;top:-1px" width="36" height="36" viewBox="0 0 36 36"><rect x="16.5" y="5.5" width="14" height="13" fill="#555" stroke="#8a8a8a"/><path d="M23.5 7.5V16.5M19 12H28" stroke="#9a9a9a" stroke-width="0.8"/><g stroke="#b4b4b4" stroke-linecap="round" fill="none"><path d="M9.5 14 L7.5 7.5 M11.8 13 L11.2 5.8 M14 13 L14.6 6.2 M16 14 L17.6 9" stroke-width="2.1"/><path d="M9 17 L5.5 13.5" stroke-width="2.3"/></g><path d="M8.5 13.5 C10 12.5 15 12 16.5 13.5 C17.5 16 17 19.5 15.5 21 H11 C9.5 20 8.5 17.5 8.5 13.5Z" fill="#b4b4b4"/><text x="18" y="31" text-anchor="middle" font-family="Liberation Sans" font-size="9.5" fill="#bdbdbd">Scroll</text></svg></div>
<div class="rb " style="top:140px;height:36px"><svg class="a" style="left:-1px;top:-1px" width="36" height="36" viewBox="0 0 36 36"><rect x="16.5" y="6.5" width="15" height="12" fill="#555" stroke="#8a8a8a"/><path d="M24 8V17M21.5 10.5L24 8L26.5 10.5M21.5 14.5L24 17L26.5 14.5" stroke="#aaa" stroke-width="1" fill="none"/><circle cx="15.5" cy="11" r="4.6" fill="#3a3a3a" stroke="#b0b0b0" stroke-width="1.4"/><circle cx="14.5" cy="10" r="1.3" fill="#666"/><path d="M12 14.5 L5 21" stroke="#b0b0b0" stroke-width="1.6"/><text x="18" y="31" text-anchor="middle" font-family="Liberation Sans" font-size="9.5" fill="#bdbdbd">Zoom</text></svg></div>
<div class="rb " style="top:179px;height:36px"><svg class="a" style="left:-1px;top:-1px" width="36" height="36" viewBox="0 0 36 36"><rect x="16.5" y="6.5" width="15" height="12" fill="#555" stroke="#8a8a8a"/><text x="20" y="17" font-family="Liberation Sans" font-size="8" fill="#aaa">x1</text><circle cx="15.5" cy="11" r="4.6" fill="#3a3a3a" stroke="#b0b0b0" stroke-width="1.4"/><circle cx="14.5" cy="10" r="1.3" fill="#666"/><path d="M12 14.5 L5 21" stroke="#b0b0b0" stroke-width="1.6"/><text x="18" y="31" text-anchor="middle" font-family="Liberation Sans" font-size="9.5" fill="#bdbdbd">Actual</text></svg></div>
<div class="rb " style="top:218px;height:36px"><svg class="a" style="left:-1px;top:-1px" width="36" height="36" viewBox="0 0 36 36"><rect x="16.5" y="6.5" width="15" height="12" fill="#555" stroke="#8a8a8a"/><rect x="21" y="7" width="10" height="6" fill="#8a8a8a"/><circle cx="15.5" cy="11" r="4.6" fill="#3a3a3a" stroke="#b0b0b0" stroke-width="1.4"/><circle cx="14.5" cy="10" r="1.3" fill="#666"/><path d="M12 14.5 L5 21" stroke="#b0b0b0" stroke-width="1.6"/><text x="18" y="31" text-anchor="middle" font-family="Liberation Sans" font-size="9.5" fill="#bdbdbd">AAHalf</text></svg></div>
<div class="rb rf" style="top:257px;height:36px"><svg class="a" style="left:-1px;top:-1px" width="36" height="36" viewBox="0 0 36 36"><g stroke="#a0a0a0" stroke-width="1" fill="none"><path d="M8 6H28M6 10H30M4.5 14H31.5M3 19H33M8 6L3 19M13 6L11 19M18 6V19M23 6L25 19M28 6L33 19"/></g><text x="18" y="31" text-anchor="middle" font-family="Liberation Sans" font-size="9.5" fill="#bdbdbd">Persp</text></svg></div>
<div class="rb rf" style="top:296px;height:36px"><svg class="a" style="left:-1px;top:-1px" width="36" height="36" viewBox="0 0 36 36"><text x="10" y="7.5" font-family="Liberation Sans" font-size="6" fill="#555">X</text><text x="16" y="7.5" font-family="Liberation Sans" font-weight="bold" font-size="6" fill="#aaa">Y</text><text x="23" y="7.5" font-family="Liberation Sans" font-size="6" fill="#555">Z</text><path d="M18 10V15M15.5 13L18 16L20.5 13" stroke="#bbb" stroke-width="1.5" fill="none"/><rect x="4" y="17" width="28" height="2" fill="#bbb"/><text x="18" y="31" text-anchor="middle" font-family="Liberation Sans" font-size="9.5" fill="#bdbdbd">Floor</text></svg></div>
<div class="rb or" style="top:334px;height:36px"><svg class="a" style="left:-1px;top:-1px" width="36" height="36" viewBox="0 0 36 36"><circle cx="25" cy="13" r="8.5" fill="url(#rdark)"/><path d="M12 9 C8 10 8 14 10 17 L12 19 M13 7 C10 7 8 9 8 12 M11 13 a2 2 0 1 0 3 -2" stroke="#1a0d00" stroke-width="1.3" fill="none"/><path d="M10 17L13 19L10 20Z" fill="#1a0d00"/><text x="18" y="31" text-anchor="middle" font-family="Liberation Sans" font-size="9.5" fill="#1a0d00">Local</text></svg></div>
<div class="rb rf" style="top:373px;height:36px"><svg class="a" style="left:-1px;top:-1px" width="36" height="36" viewBox="0 0 36 36"><path d="M4 19H32" stroke="#aaa" stroke-width="1"/><path d="M18 13V21" stroke="#aaa" stroke-width="1"/><path d="M5 16L9 13V19Z M31 16L27 13V19Z" fill="#bbb"/><path d="M9 16H15M21 16H27" stroke="#bbb" stroke-width="2"/><text x="18" y="31" text-anchor="middle" font-family="Liberation Sans" font-size="9.5" fill="#bdbdbd">L.Sym</text></svg></div>
<div class="rb or" style="top:412px;height:17px"><svg class="a" style="left:-1px;top:-1px" width="36" height="17"><path d="M13 12 C8 12 7 5 11 4 C14 3 16 6 15 9" stroke="#1a0d00" stroke-width="1.2" fill="none"/><path d="M12 10L15 13L11 13Z" fill="#1a0d00"/><text x="15" y="14" font-family="Liberation Sans" font-size="10" fill="#1a0d00">XYZ</text></svg></div>
<svg class="a" style="left:1586px;top:431px" width="18" height="16"><path d="M8 12 C3 12 2 5 6 3.5 C9.5 2.5 12 5 11 8.5" stroke="#aaa" stroke-width="1.3" fill="none"/><path d="M7 10.5L10 13L6 13.5Z" fill="#aaa"/><text x="9" y="14" font-family="Liberation Sans" font-size="9" fill="#aaa">Z</text></svg>
<svg class="a" style="left:1582px;top:452px" width="18" height="16"><path d="M8 12 C3 12 2 5 6 3.5 C9.5 2.5 12 5 11 8.5" stroke="#aaa" stroke-width="1.3" fill="none"/><path d="M7 10.5L10 13L6 13.5Z" fill="#aaa"/><text x="8" y="14.5" font-family="Liberation Sans" font-size="9" fill="#aaa">Y</text></svg>
<div class="rb " style="top:470px;height:36px"><svg class="a" style="left:-1px;top:-1px" width="36" height="36" viewBox="0 0 36 36"><circle cx="18" cy="12" r="3.5" fill="url(#rball)"/><g stroke="#aaa" stroke-width="1" fill="none"><path d="M7 5L11 9M7 5H10M7 5V8 M29 5L25 9M29 5H26M29 5V8 M7 20L11 16M7 20H10M7 20V17 M29 20L25 16M29 20H26M29 20V17"/></g><text x="18" y="31" text-anchor="middle" font-family="Liberation Sans" font-size="9.5" fill="#bdbdbd">Frame</text></svg></div>
<div class="rb " style="top:509px;height:36px"><svg class="a" style="left:-1px;top:-1px" width="36" height="36" viewBox="0 0 36 36"><circle cx="23" cy="12" r="7.5" fill="url(#rball)"/><rect x="22" y="10" width="4" height="4" fill="none" stroke="#ccc" stroke-width="0.8"/><g stroke="#b4b4b4" stroke-linecap="round" fill="none"><path d="M9.5 14 L7.5 7.5 M11.8 13 L11.2 5.8 M14 13 L14.6 6.2 M16 14 L17.6 9" stroke-width="2.1"/><path d="M9 17 L5.5 14" stroke-width="2.3"/></g><path d="M8.5 13.5 C10 12.5 15 12 16.5 13.5 C17.5 16 17 19.5 15.5 21 H11 C9.5 20 8.5 17.5 8.5 13.5Z" fill="#b4b4b4"/><text x="18" y="31" text-anchor="middle" font-family="Liberation Sans" font-size="9.5" fill="#bdbdbd">Move</text></svg></div>
<div class="rb " style="top:547px;height:36px"><svg class="a" style="left:-1px;top:-1px" width="36" height="36" viewBox="0 0 36 36"><circle cx="24" cy="12" r="7" fill="url(#rball)"/><rect x="23" y="10" width="4" height="4" fill="none" stroke="#ccc" stroke-width="0.8"/><circle cx="15.5" cy="11" r="4.6" fill="#3a3a3a" stroke="#b0b0b0" stroke-width="1.4"/><circle cx="14.5" cy="10" r="1.3" fill="#666"/><path d="M12 14.5 L5 21" stroke="#b0b0b0" stroke-width="1.6"/><text x="18" y="31" text-anchor="middle" font-family="Liberation Sans" font-size="9.5" fill="#bdbdbd">Scale</text></svg></div>
<div class="rb " style="top:586px;height:36px"><svg class="a" style="left:-1px;top:-1px" width="36" height="36" viewBox="0 0 36 36"><circle cx="17" cy="14" r="7.5" fill="url(#rball)"/><rect x="15" y="16" width="4" height="4" fill="none" stroke="#ccc" stroke-width="0.8"/><path d="M11 10 V7 a6 6 0 0 1 11 0 M22 13 C27 13 27 20 22 21" stroke="#c0c0c0" stroke-width="1.4" fill="none"/><path d="M20 19L23 22L19 23Z" fill="#c0c0c0"/><text x="18" y="31" text-anchor="middle" font-family="Liberation Sans" font-size="9.5" fill="#bdbdbd" textLength="26" lengthAdjust="spacingAndGlyphs">Rotate</text></svg></div>
<div class="rb rf" style="top:624px;height:36px"><svg class="a" style="left:-1px;top:-1px" width="36" height="36" viewBox="0 0 36 36"><rect x="7.5" y="5.5" width="21" height="15" fill="#333" stroke="#bbb" stroke-width="1"/><g stroke="#bbb" stroke-width="0.8"><path d="M7.5 10.5H28.5M7.5 15.5H28.5M12.7 5.5V20.5M18 5.5V20.5M23.3 5.5V20.5"/></g><text x="18" y="31" text-anchor="middle" font-family="Liberation Sans" font-size="9.5" fill="#bdbdbd">PolyF</text></svg></div>
<div class="rb rf" style="top:663px;height:36px"><svg class="a" style="left:-1px;top:-1px" width="36" height="36" viewBox="0 0 36 36"><rect x="14.5" y="5.5" width="15" height="13" fill="none" stroke="#999" stroke-width="1"/><circle cx="14" cy="15" r="6.5" fill="url(#rball)"/><rect x="14.5" y="5.5" width="15" height="13" fill="rgba(120,120,120,0.25)" stroke="none"/><text x="18" y="31" text-anchor="middle" font-family="Liberation Sans" font-size="9.5" fill="#bdbdbd">Transp</text></svg></div>
<div class="rb" style="top:702px;height:36px;background:#6e3c14;border-color:#2a1a0c"><svg class="a" style="left:-1px;top:-1px" width="36" height="36" viewBox="0 0 36 36"><circle cx="18" cy="14" r="7" fill="#5e3412"/><path d="M11 21L25 6" stroke="#4a2a10" stroke-width="1.5"/><text x="18" y="31" text-anchor="middle" font-family="Liberation Sans" font-size="9.5" font-weight="bold" fill="#54381e">Ghost</text></svg></div>
<div class="rb rf" style="top:741px;height:36px"><svg class="a" style="left:-1px;top:-1px" width="36" height="36" viewBox="0 0 36 36"><path d="M9 13 C4 11 6 6 13 6 C20 6 22 9 18 11 C15 12 11 12 9 13 L8 17" stroke="#bbb" stroke-width="1" fill="none"/><rect x="18.5" y="12.5" width="9" height="8" fill="none" stroke="#bbb" stroke-width="1" stroke-dasharray="2 1.5"/><text x="18" y="31" text-anchor="middle" font-family="Liberation Sans" font-size="9.5" fill="#bdbdbd">Lasso</text></svg></div>
<div class="a" style="left:1616px;top:457px;width:6px;height:51px;background:repeating-conic-gradient(#363636 0 25%,#222 0 50%) 0 0/2px 2px"></div>
<svg class="a" style="left:1614px;top:508px" width="9" height="21"><path d="M1 1 L7 5.5 L1 10Z" fill="#444"/><path d="M7 10.5 L1 15 L7 20Z" fill="#444"/></svg>
<div class="a" style="left:1616px;top:531px;width:6px;height:50px;background:repeating-conic-gradient(#363636 0 25%,#222 0 50%) 0 0/2px 2px"></div>
</body></html>
